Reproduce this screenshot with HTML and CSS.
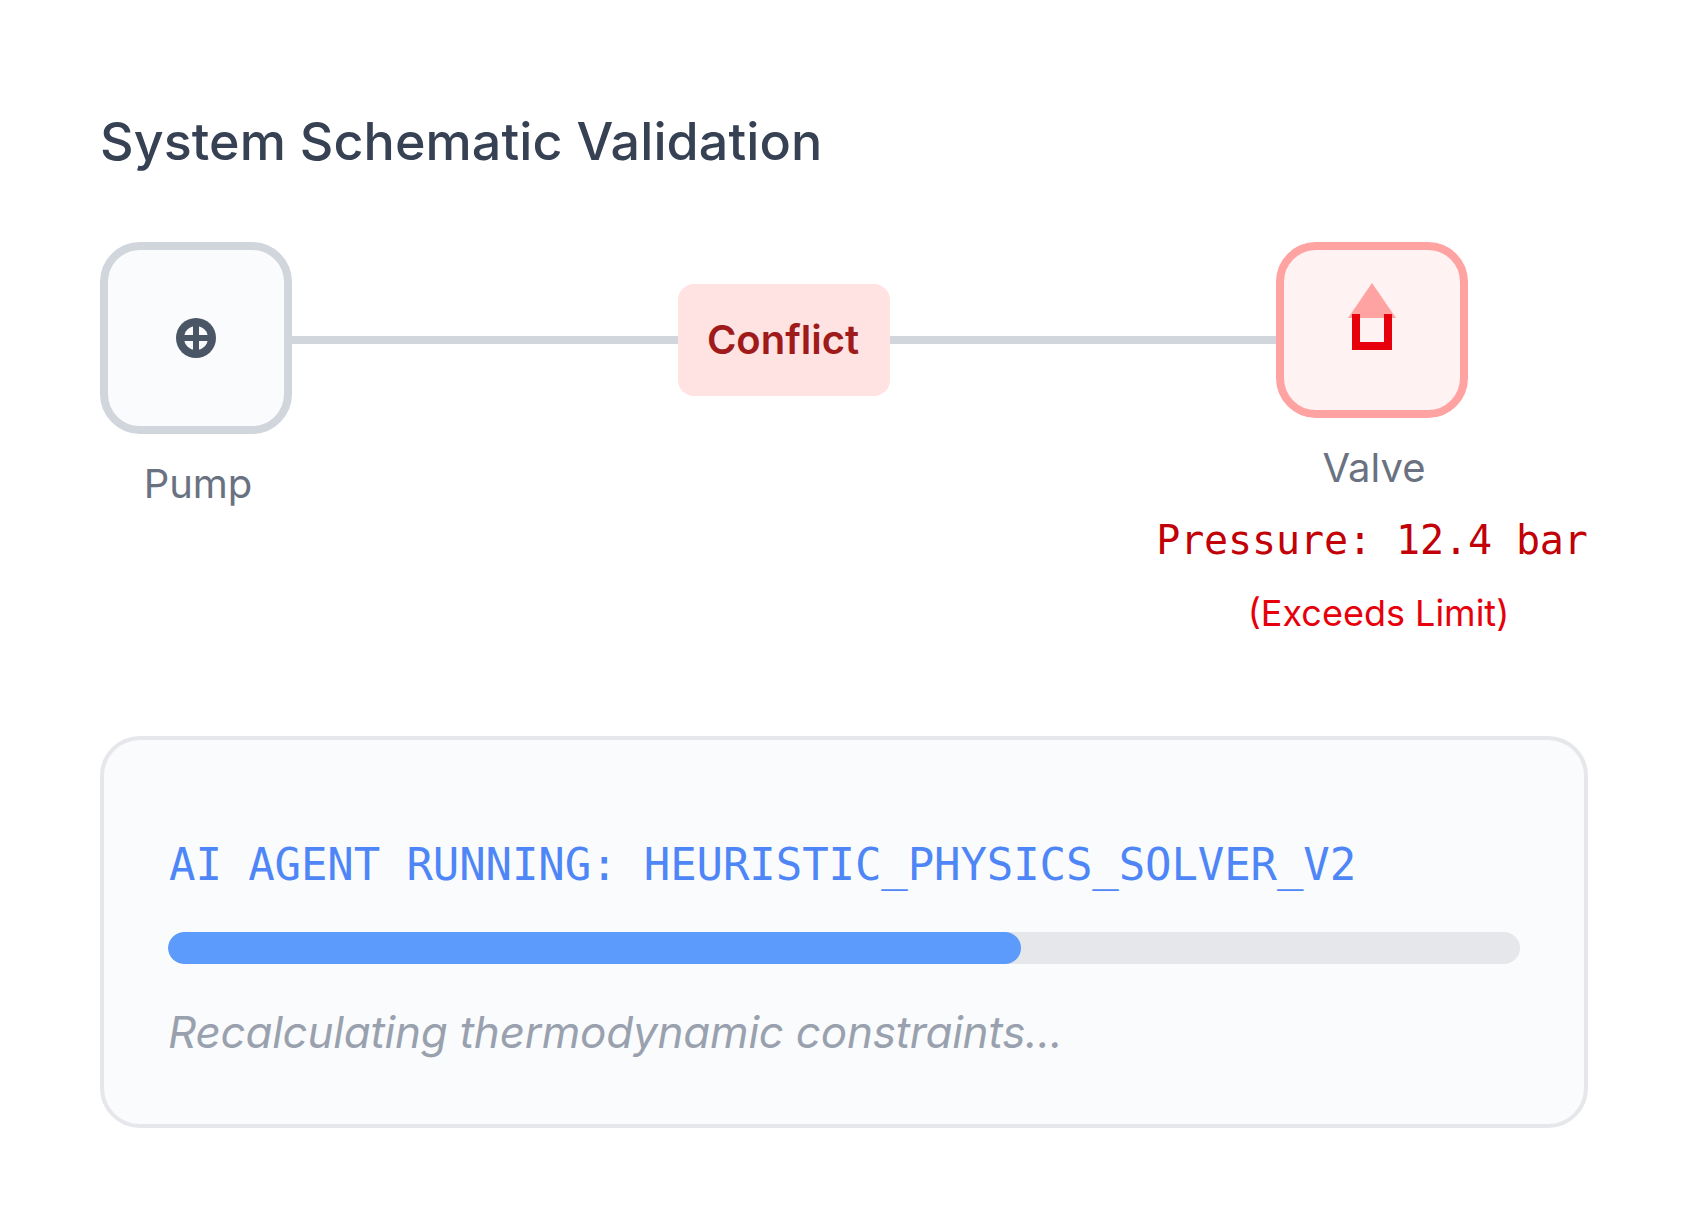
FILE: index.html
```html
<!DOCTYPE html>
<html lang="en">
<head>
<meta charset="UTF-8">
<title>System Schematic Validation</title>
<link rel="stylesheet" href="styles.css">
</head>
<body>
<div class="container">
  <h2 class="title">System Schematic Validation</h2>
  <div class="schematic">
    <div class="node">
      <div class="node-box">
        <svg class="pump-icon" width="40" height="40" viewBox="0 0 40 40">
          <circle cx="20" cy="20" r="20" fill="#4a5565"/>
          <circle cx="20" cy="20" r="12" fill="#fafbfc"/>
          <path d="M20 6v28M6 20h28" stroke="#4a5565" stroke-width="6"/>
        </svg>
      </div>
      <div class="node-label">Pump</div>
    </div>
    <div class="link">
      <div class="pipe"></div>
      <div class="conflict">Conflict</div>
      <div class="pipe"></div>
    </div>
    <div class="node">
      <div class="node-box node-box-error">
        <div class="valve-icon">
          <div class="valve-top"></div>
          <div class="valve-body"></div>
        </div>
      </div>
      <div class="node-label node-label-valve">Valve</div>
      <div class="pressure">Pressure: 12.4 bar</div>
      <div class="limit">(Exceeds Limit)</div>
    </div>
  </div>
  <div class="agent-panel">
    <div class="agent-name">AI AGENT RUNNING: HEURISTIC_PHYSICS_SOLVER_V2</div>
    <div class="progress">
      <div class="progress-fill" style="width: 63.1%"></div>
    </div>
    <p class="agent-status">Recalculating thermodynamic constraints...</p>
  </div>
</div>
</body>
</html>
```

FILE: styles.css
```css
body {
  font-family: Inter, "Noto Sans", sans-serif;
  margin: 0;
  padding: 0;
  background-color: #fff;
}

.container {
  padding: 109px 102px 0 100px;
}

.title {
  margin: 0 0 67px;
  font-size: 52px;
  line-height: 66px;
  font-weight: 500;
  letter-spacing: 0.08px;
  color: #364153;
}

.schematic {
  display: flex;
  align-items: flex-start;
  padding-right: 120px;
  height: 494px;
}

.node {
  width: 192px;
  display: flex;
  flex-direction: column;
  align-items: center;
  white-space: nowrap;
}

.node-box {
  width: 192px;
  height: 192px;
  box-sizing: border-box;
  border: 8px solid #d1d5dc;
  border-radius: 40px;
  background-color: #fafbfc;
  display: flex;
  align-items: center;
  justify-content: center;
}

.node-box-error {
  height: 176px;
  border-color: #ffa2a2;
  background-color: #fef2f2;
  align-items: flex-start;
  padding-top: 33px;
}

.node-label {
  margin-top: 20px;
  padding-left: 4px;
  font-size: 40px;
  line-height: 60px;
  color: #6a7282;
}

.pressure {
  margin-top: 12px;
  font-family: "DejaVu Sans Mono", "Liberation Mono", monospace;
  font-size: 40px;
  line-height: 60px;
  letter-spacing: -0.1px;
  color: #c10007;
}

.limit {
  margin-top: 16px;
  padding-left: 13px;
  font-size: 36px;
  line-height: 54px;
  color: #e7000b;
}

.link {
  flex: 1;
  display: flex;
  align-items: center;
  margin-top: 42px;
}

.pipe {
  flex: 1;
  height: 8px;
  background-color: #d1d5dc;
}

.conflict {
  box-sizing: border-box;
  width: 212px;
  height: 112px;
  padding: 0 2px 2px 0;
  border-radius: 16px;
  background-color: #ffe2e2;
  color: #9f1a1a;
  font-size: 40px;
  font-weight: 600;
  display: flex;
  align-items: center;
  justify-content: center;
}

.valve-icon {
  width: 48px;
  height: 67px;
  display: flex;
  flex-direction: column;
  align-items: center;
}

.valve-top {
  width: 0;
  height: 0;
  border-left: 24px solid transparent;
  border-right: 24px solid transparent;
  border-bottom: 35px solid #ffa2a2;
}

.valve-body {
  width: 40px;
  height: 36px;
  box-sizing: border-box;
  margin-top: -4px;
  border: 8px solid #e7000b;
  border-top: 0;
}

.agent-panel {
  box-sizing: border-box;
  height: 392px;
  padding: 103px 64px 0;
  border: 4px solid #e5e7eb;
  border-radius: 40px;
  background-color: #fafbfc;
}

.agent-name {
  margin-left: 1px;
  font-family: "DejaVu Sans Mono", "Liberation Mono", monospace;
  font-size: 44px;
  line-height: 44px;
  letter-spacing: -0.11px;
  color: #4f86f7;
}

.progress {
  height: 32px;
  margin-top: 45px;
  border-radius: 16px;
  background-color: #e5e7eb;
  overflow: hidden;
}

.progress-fill {
  height: 100%;
  border-radius: 16px;
  background-color: #5c9bfc;
}

.agent-status {
  margin: 35px 0 0;
  font-size: 44px;
  line-height: 66px;
  font-style: italic;
  letter-spacing: -0.25px;
  color: #99a1af;
}
```
